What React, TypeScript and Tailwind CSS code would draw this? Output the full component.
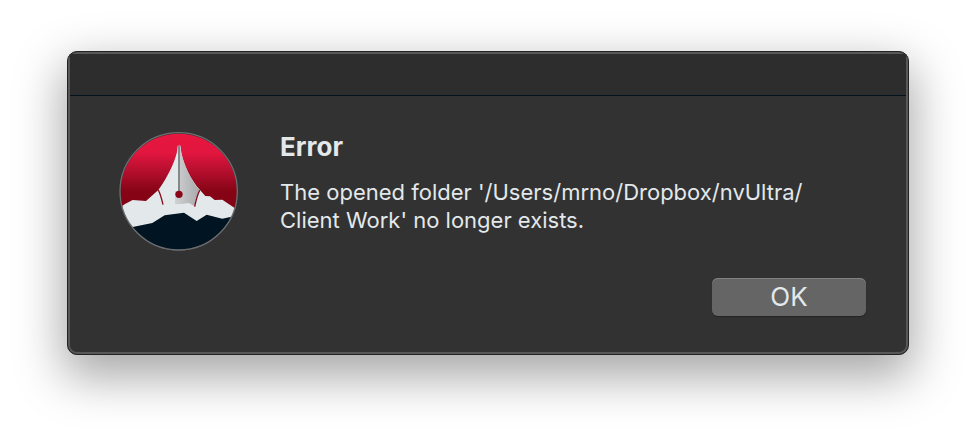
function AppIcon() {
  return (
    <svg viewBox="27 27 360 360" className="size-[120px] shrink-0" role="img" aria-label="Application icon">
      <defs>
        <linearGradient id="sky" x1="0" y1="0" x2="0" y2="1">
          <stop offset="0" stopColor="#e8173f" />
          <stop offset="0.18" stopColor="#e2163f" />
          <stop offset="0.38" stopColor="#a80c28" />
          <stop offset="0.5" stopColor="#860415" />
          <stop offset="1" stopColor="#7c0010" />
        </linearGradient>
        <linearGradient id="nib" x1="0" y1="0" x2="1" y2="0">
          <stop offset="0" stopColor="#cfd1d2" />
          <stop offset="0.5" stopColor="#bbbdbf" />
          <stop offset="1" stopColor="#a8aaac" />
        </linearGradient>
        <clipPath id="disc">
          <circle cx="206" cy="210" r="175" />
        </clipPath>
      </defs>
      <g clipPath="url(#disc)">
        <rect x="27" y="27" width="360" height="360" fill="url(#sky)" />
        <path
          d="M20 264L45 246L68 234L108 237L145 204C172 166 192 126 201 90L203 71H211L214 92C222 130 242 172 270 204L286 222L300 223L314 234L337 233L374 258L400 266V400H20Z"
          fill="#e3e8eb"
        />
        <path d="M207 71H211L214 92C222 130 242 172 268 204L257 236L253 252L236 243L220 245L195 247V207H207Z" fill="url(#nib)" />
        <path d="M204 72H210V207H204Z" fill="#858789" />
        <path d="M145 204C151 216 155 230 159 248M269 205C262 220 258 235 254 254" fill="none" stroke="#870a1c" strokeWidth="4" />
        <circle cx="207" cy="217" r="11" fill="#8c0619" />
        <path
          d="M20 320L68 315L127 303L164 280L222 272L260 297L290 278L337 290L364 284L400 264V400H20Z"
          fill="#001422"
        />
      </g>
      <circle cx="206" cy="208" r="176" fill="none" stroke="#6b6e70" strokeWidth="4" />
    </svg>
  );
}

export default function App() {
  return (
    <main className="flex min-h-screen flex-col bg-white px-[67px] pt-[51px] pb-[83px] font-['Inter','Liberation_Sans',sans-serif] text-[#e3e8eb]">
      <section
        role="alertdialog"
        aria-labelledby="title"
        aria-describedby="message"
        className="overflow-hidden rounded-[10px] border border-[#222] bg-[#323232] shadow-[0_18px_48px_4px_rgba(0,0,0,0.35)]"
      >
        <div className="rounded-[9px] border-2 border-[#585858]">
          <header className="h-[42px] border-b border-[#03131d] bg-[#2d2d2d]" />
          <div className="flex items-start gap-[41px] pt-[35px] pl-[49px]">
            <AppIcon />
            <div className="min-w-0">
              <h1 id="title" className="text-[26px] leading-[32px] font-bold">
                Error
              </h1>
              <p id="message" className="mt-[15px] text-[22px] leading-[28px]">
                The opened folder '/Users/mrno/Dropbox/nvUltra/
                <br />
                Client Work' no longer exists.
              </p>
            </div>
          </div>
          <footer className="flex justify-end pt-[27px] pr-10 pb-9">
            <button
              type="button"
              className="h-[38px] w-[154px] rounded-md bg-[#656565] text-[26px] leading-[38px] shadow-[inset_0_1px_0_#828282,0_1px_1px_#242424]"
            >
              OK
            </button>
          </footer>
        </div>
      </section>
    </main>
  );
}
